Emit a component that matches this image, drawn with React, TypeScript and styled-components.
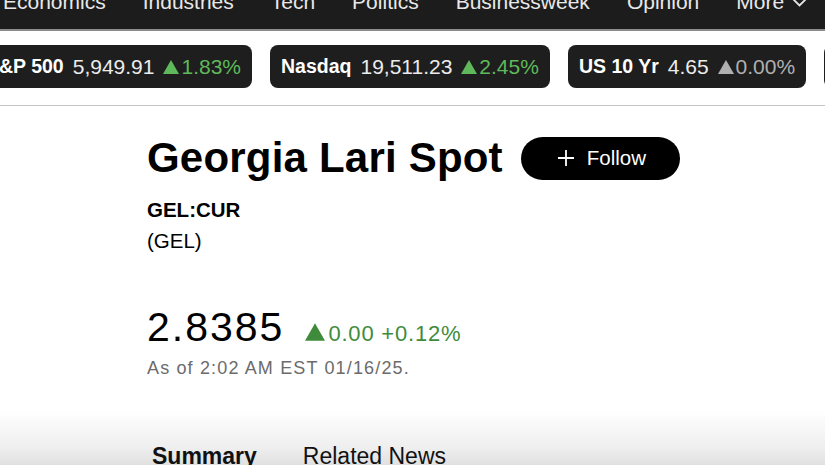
import React from 'react';
import styled, { createGlobalStyle } from 'styled-components';

interface Ticker {
  name: string;
  value: string;
  change: string;
  flat?: boolean;
}

interface TriangleProps {
  color: string;
  size: number;
}

interface ChangeProps {
  flat?: boolean;
}

interface TabProps {
  active?: boolean;
}

const navItems = ['Economics', 'Industries', 'Tech', 'Politics', 'Businessweek', 'Opinion'];

const tickers: Ticker[] = [
  { name: 'S&P 500', value: '5,949.91', change: '1.83%' },
  { name: 'Nasdaq', value: '19,511.23', change: '2.45%' },
  { name: 'US 10 Yr', value: '4.65', change: '0.00%', flat: true },
  { name: 'Crude Oil', value: '80.04', change: '0.01%' },
];

const GlobalStyle = createGlobalStyle`
  html, body {
    margin: 0;
    padding: 0;
    background: #ffffff;
    overflow: hidden;
  }
  body {
    font-family: "Liberation Sans", Arial, sans-serif;
    color: #000;
  }
`;

const Page = styled.div`
  width: 825px;
  height: 465px;
  overflow: hidden;
  display: flex;
  flex-direction: column;
`;

const TopNav = styled.nav`
  height: 29px;
  flex-shrink: 0;
  background: #1c1c1c;
  border-bottom: 2px solid #8c8c8c;
  overflow: hidden;
`;

const NavList = styled.ul`
  display: flex;
  align-items: center;
  gap: 37px;
  list-style: none;
  margin: -10px 0 0 0;
  padding: 0 0 0 3px;
`;

const NavItem = styled.li`
  color: #e8e8e8;
  font-size: 21px;
  line-height: 24px;
  white-space: nowrap;
  display: flex;
  align-items: center;
  gap: 8px;
`;

const TickerStrip = styled.div`
  flex-shrink: 0;
  padding: 14px 0 17px;
  border-bottom: 1px solid #c4c4c4;
  overflow: hidden;
`;

const TickerRow = styled.div`
  display: flex;
  gap: 18px;
  margin-left: -25px;
  width: max-content;
`;

const TickerPill = styled.div`
  height: 43px;
  display: flex;
  align-items: center;
  gap: 9px;
  padding: 0 11px;
  background: #1e1e1e;
  border-radius: 8px;
  color: #ececec;
  font-size: 21px;
  white-space: nowrap;
`;

const TickerName = styled.span`
  font-size: 19.5px;
  font-weight: 700;
  color: #ffffff;
`;

const TickerChange = styled.span<ChangeProps>`
  display: flex;
  align-items: center;
  gap: 2px;
  color: ${(props) => (props.flat ? '#b0b0b0' : '#5fb95a')};
`;

const Triangle = styled.svg<TriangleProps>`
  width: ${(props) => props.size}px;
  height: ${(props) => Math.round(props.size * 0.9)}px;
  fill: ${(props) => props.color};
  flex-shrink: 0;
`;

const Main = styled.main`
  padding: 27px 0 0 147px;
`;

const TitleRow = styled.div`
  display: flex;
  align-items: center;
  gap: 18px;
`;

const Title = styled.h1`
  margin: 0;
  font-size: 42px;
  line-height: 50px;
  font-weight: 700;
  letter-spacing: 0.2px;
`;

const FollowButton = styled.button`
  height: 43px;
  display: flex;
  align-items: center;
  gap: 12px;
  padding: 0 34px 0 36px;
  border: none;
  border-radius: 22px;
  background: #000;
  color: #fff;
  font-family: inherit;
  font-size: 20.5px;
  cursor: pointer;
`;

const Ticker = styled.div`
  margin-top: 15px;
  font-size: 20.5px;
  line-height: 24px;
  font-weight: 700;
`;

const Code = styled.div`
  margin-top: 7px;
  font-size: 20.5px;
  line-height: 24px;
`;

const PriceRow = styled.div`
  margin-top: 50px;
  display: flex;
  align-items: baseline;
  gap: 21px;
`;

const Price = styled.span`
  font-size: 41px;
  line-height: 49px;
  letter-spacing: 2px;
`;

const PriceChange = styled.span`
  display: flex;
  align-items: baseline;
  gap: 3px;
  color: #3f8b3c;
  font-size: 22px;
  letter-spacing: 0.8px;
`;

const AsOf = styled.div`
  margin-top: 5px;
  color: #6b6b6b;
  font-size: 18px;
  line-height: 22px;
  letter-spacing: 1.15px;
`;

const BottomFade = styled.div`
  margin-top: 6px;
  flex: 1;
  background: linear-gradient(
    180deg,
    #ffffff 0%,
    #ffffff 30%,
    #eeeeee 75%,
    #dcdcdc 100%
  );
`;

const Tabs = styled.div`
  display: flex;
  gap: 46px;
  padding: 57px 0 0 152px;
`;

const Tab = styled.span<TabProps>`
  font-size: 23px;
  line-height: 28px;
  font-weight: ${(props) => (props.active ? 700 : 400)};
  color: #111;
`;

const App: React.FC = () => {
  return (
    <Page>
      <GlobalStyle />
      <TopNav>
        <NavList>
          {navItems.map((item) => (
            <NavItem key={item}>{item}</NavItem>
          ))}
          <NavItem>
            More
            <svg width="15" height="9" viewBox="0 0 15 9" fill="none">
              <polyline points="1,1 7.5,7.5 14,1" stroke="#e8e8e8" strokeWidth="1.8" />
            </svg>
          </NavItem>
        </NavList>
      </TopNav>

      <TickerStrip>
        <TickerRow>
          {tickers.map((t) => (
            <TickerPill key={t.name}>
              <TickerName>{t.name}</TickerName>
              <span>{t.value}</span>
              <TickerChange flat={t.flat}>
                <Triangle
                  viewBox="0 0 16 14"
                  size={16}
                  color={t.flat ? '#b0b0b0' : '#5fb95a'}
                >
                  <polygon points="8,0 16,14 0,14" />
                </Triangle>
                {t.change}
              </TickerChange>
            </TickerPill>
          ))}
        </TickerRow>
      </TickerStrip>

      <Main>
        <TitleRow>
          <Title>Georgia Lari Spot</Title>
          <FollowButton>
            <svg width="18" height="18" viewBox="0 0 18 18" fill="none">
              <path d="M9 1v16M1 9h16" stroke="#fff" strokeWidth="1.8" />
            </svg>
            Follow
          </FollowButton>
        </TitleRow>
        <Ticker>GEL:CUR</Ticker>
        <Code>(GEL)</Code>
        <PriceRow>
          <Price>2.8385</Price>
          <PriceChange>
            <Triangle viewBox="0 0 16 14" size={20} color="#3f8b3c">
              <polygon points="8,0 16,14 0,14" />
            </Triangle>
            0.00 +0.12%
          </PriceChange>
        </PriceRow>
        <AsOf>As of 2:02 AM EST 01/16/25.</AsOf>
      </Main>

      <BottomFade>
        <Tabs>
          <Tab active>Summary</Tab>
          <Tab>Related News</Tab>
        </Tabs>
      </BottomFade>
    </Page>
  );
};

export default App;
